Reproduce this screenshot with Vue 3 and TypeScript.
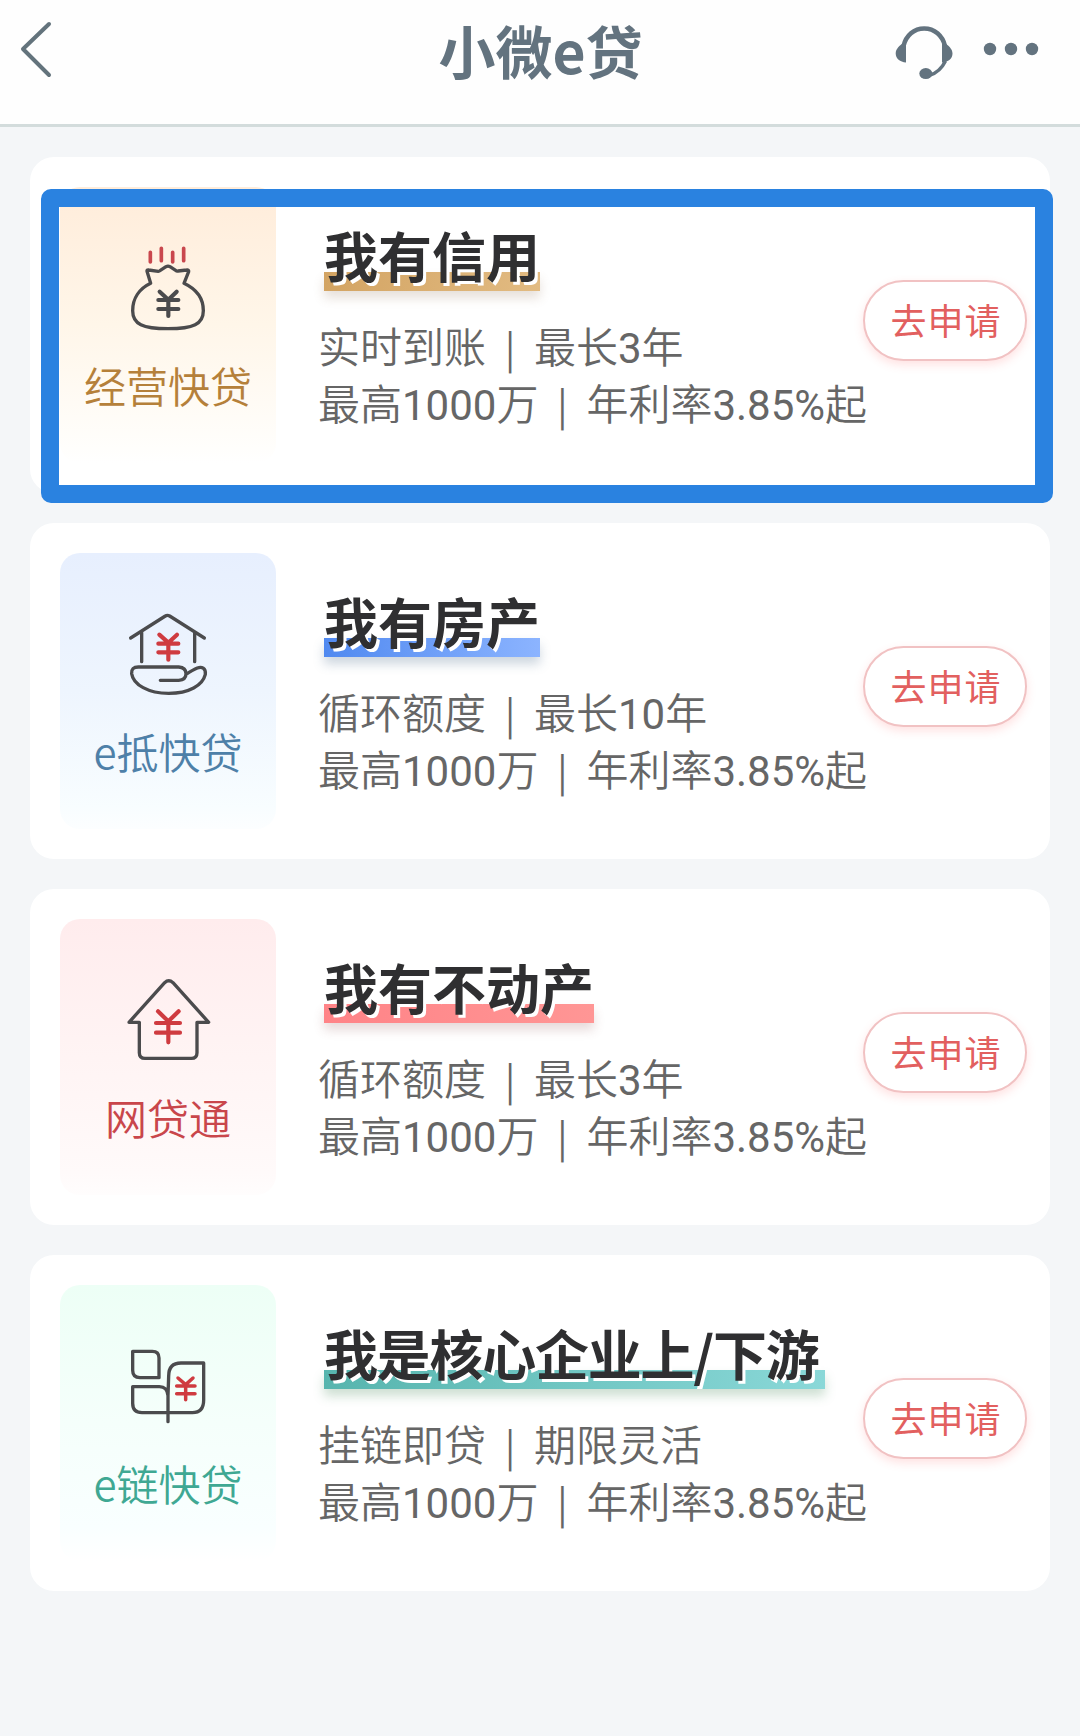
<script setup lang="ts">
interface Product {
  id: string
  label: string
  title: string
  feature: [string, string]
  limit: [string, string]
  highlighted?: boolean
}

const limit: [string, string] = ['最高1000万', '年利率3.85%起']

const products: Product[] = [
  { id: 'credit', label: '经营快贷', title: '我有信用', feature: ['实时到账', '最长3年'], limit, highlighted: true },
  { id: 'house', label: 'e抵快贷', title: '我有房产', feature: ['循环额度', '最长10年'], limit },
  { id: 'estate', label: '网贷通', title: '我有不动产', feature: ['循环额度', '最长3年'], limit },
  { id: 'chain', label: 'e链快贷', title: '我是核心企业上/下游', feature: ['挂链即贷', '期限灵活'], limit },
]
</script>

<template>
  <div class="page">
    <header class="header">
      <svg class="back" width="60" height="100" viewBox="0 0 60 100">
        <path d="M49 24 L23 49 L49 75" />
      </svg>
      <h1>小微e贷</h1>
      <svg class="tools" width="190" height="100" viewBox="890 0 190 100">
        <path class="band" d="M903.500 46C906 35.500 914 28.500 924.200 28.500S942.500 35.500 945 46" />
        <path d="M906 43V62.500C900 62 895.700 58.500 895.700 53.500S900 45.500 903 43Z" />
        <path d="M942 43V62.500C948.500 62 952.500 58.500 952.500 53.500S948 45.500 945 43Z" />
        <path class="wire" d="M945.500 61C942 68 937 73 930 75" />
        <ellipse cx="925.800" cy="73.600" rx="6.500" ry="5.500" />
        <circle cx="990" cy="49" r="6.200" />
        <circle cx="1011" cy="49" r="6.200" />
        <circle cx="1032" cy="49" r="6.200" />
      </svg>
    </header>

    <main class="list">
      <section v-for="p in products" :key="p.id" class="card" :class="p.id">
        <div class="tile">
          <svg v-if="p.id === 'credit'" class="icon" viewBox="120 21 648 510">
            <g class="steam">
              <path d="M391 217V246M424 205V242M458 217V246M491 205V242" />
            </g>
            <path d="M392 310L381 274Q380 269 386 270L415 274Q418 274 421 271L438 260Q444 257 450 260L467 271Q470 274 474 273L500 270Q507 269 506 275L492 310C530 328 550 356 550 392C550 432 520 446 444 446S338 432 338 392C338 356 358 326 392 310Z" />
            <path class="yen-dark" d="M419 335L445 359L470 335M415 360H475M415 387H475M445 359V408" />
          </svg>
          <svg v-else-if="p.id === 'house'" class="icon" viewBox="120 128 648 510">
            <path d="M332 383L436 317Q442 313 449 317L553 383M365 366V454M524 366V454" />
            <path d="M421 510H476Q498 508 498 490T476 470H355Q333 470 335 490C340 523 385 549 446 549S548 525 556 492C558 473 545 468 532 473Q520 478 498 492" />
            <path class="yen" d="M418 373L445 397L471 373M415 400H475M415 426H475M445 397V448" />
          </svg>
          <svg v-else-if="p.id === 'estate'" class="icon" viewBox="120 117 648 510">
            <path d="M358 427H327L434 308Q446 297 459 308L566 427H531V518Q531 535 514 535H375Q358 535 358 518Z" />
            <path class="yen" d="M414 394L445 424L476 394M408 429H480M408 458H480M445 424V487" />
          </svg>
          <svg v-else class="icon" viewBox="120 105 648 510">
            <path d="M338 304H397Q417 304 417 324V383H360Q338 383 338 361Z" />
            <path d="M444 437Q442 410 418 410H338V460Q338 488 366 488H517Q551 488 551 450V339H483Q446 339 446 378L444 437V515" />
            <path class="yen thin" d="M474 384L497 404L519 384M470 408H525M470 431H525M497 404V449" />
          </svg>
          <span class="label">{{ p.label }}</span>
        </div>

        <div class="info">
          <h2>{{ p.title }}</h2>
          <p>{{ p.feature[0] }}<i>|</i>{{ p.feature[1] }}</p>
          <p>{{ p.limit[0] }}<i>|</i>{{ p.limit[1] }}</p>
        </div>

        <button type="button">去申请</button>
        <div v-if="p.highlighted" class="highlight"></div>
      </section>
    </main>
  </div>
</template>

<style>
body {
  background: #f4f6f8;
}
</style>

<style scoped>
.page {
  min-height: 1736px;
  background: #f4f6f8;
  font-family: Roboto, "Noto Sans CJK SC DemiLight", "Noto Sans CJK SC", sans-serif;
}
.header {
  box-sizing: border-box;
  height: 127px;
  display: flex;
  align-items: flex-start;
  justify-content: space-between;
  background: #fefefe;
  border-bottom: 3px solid #d3dcdc;
}
.header h1 {
  flex: 1;
  margin: 0 0 0 131px;
  text-align: center;
  font: 700 57px/98px "Noto Sans CJK SC", sans-serif;
  color: #63737f;
}
.back path {
  fill: none;
  stroke: #63737c;
  stroke-width: 4;
  stroke-linecap: round;
  stroke-linejoin: round;
}
.tools {
  fill: #63737f;
}
.tools .band,
.tools .wire {
  fill: none;
  stroke: #63737f;
  stroke-width: 4.5;
}
.tools .wire {
  stroke-width: 3.5;
}
.list {
  display: flex;
  flex-direction: column;
  gap: 30px;
  padding: 30px;
}
.card {
  position: relative;
  box-sizing: border-box;
  height: 336px;
  padding: 30px 23px 30px 30px;
  display: flex;
  background: #fff;
  border-radius: 24px;
}
.tile {
  width: 216px;
  height: 276px;
  flex: none;
  display: flex;
  flex-direction: column;
  align-items: center;
  border-radius: 20px;
}
.credit .tile { background: linear-gradient(#ffecda, #fff6e9 50%, #fffefc 95%, #fff); }
.house .tile { background: linear-gradient(#e7effe, #eef5fe 50%, #f8fdff 92%, #fcfeff); }
.estate .tile { background: linear-gradient(#ffeced, #fff4f4 50%, #fffafa 92%, #fffdfd); }
.chain .tile { background: linear-gradient(#edfff6, #f5fffb 50%, #f9ffff 88%, #fff); }
.icon {
  width: 216px;
  height: 170px;
  flex: none;
  fill: none;
  stroke: #4b4b4d;
  stroke-width: 10;
  stroke-linecap: round;
  stroke-linejoin: round;
}
.steam {
  stroke: #c9474d;
  stroke-width: 11;
}
.yen,
.yen-dark {
  stroke-width: 12.5;
}
.yen {
  stroke: #cf3b40;
}
.thin {
  stroke-width: 10.5;
}
.label {
  margin-top: -2px;
  font-size: 42px;
  font-weight: 350;
  line-height: 60px;
  font-family: "Noto Sans CJK SC", sans-serif;
}
.credit .label { color: #b5803a; }
.house .label { color: #4e80a8; }
.estate .label { color: #c9464b; }
.chain .label { color: #3fa893; }
.info {
  flex: 1;
  min-width: 0;
  padding: 30px 0 0 42px;
}
.info h2 {
  position: relative;
  z-index: 0;
  width: max-content;
  margin: 0 0 29px 6px;
  height: 74px;
  font: 700 54px/75px "Noto Sans CJK SC", sans-serif;
  color: #2f2f31;
  text-shadow: 3px 3px 0 #fff;
}
.chain h2 {
  padding-right: 7px;
  letter-spacing: -1.25px;
}
.info h2::before {
  content: "";
  position: absolute;
  z-index: -1;
  left: 0;
  right: 0;
  bottom: 0;
  height: 19px;
  background: var(--bar);
  box-shadow: 0 7px 11px var(--glow);
}
.credit { --bar: linear-gradient(90deg, #d3a463, #e2bb82); --glow: #88664433; }
.house { --bar: linear-gradient(90deg, #5089f0, #8cb4ff); --glow: #44668844; }
.estate { --bar: linear-gradient(90deg, #ff8387, #ff9695); --glow: #88444433; }
.chain { --bar: linear-gradient(90deg, #57b5ae, #8ad8d8); --glow: #44885544; }
.info p {
  margin: 0;
  height: 57px;
  line-height: 57px;
  font-size: 42px;
  color: #666;
  white-space: nowrap;
}
.info i {
  display: inline-block;
  width: 48px;
  font-style: normal;
  font-family: "Noto Sans CJK SC", sans-serif;
  font-size: 38px;
  line-height: 50px;
  text-align: center;
}
button {
  position: relative;
  box-sizing: border-box;
  width: 164px;
  height: 81px;
  flex: none;
  margin: 93px 0 0 -100px;
  padding: 0 0 4px 2px;
  border: 2px solid #f1c2c3;
  border-radius: 41px;
  background: #fff;
  box-shadow: 0 4px 10px #ff60602e;
  font: 400 36px/70px "Noto Sans CJK SC", sans-serif;
  letter-spacing: 1px;
  color: #e2605f;
}
.highlight {
  position: absolute;
  left: 11px;
  top: 32px;
  box-sizing: border-box;
  width: 1012px;
  height: 314px;
  border: 18px solid #2a82e0;
  border-radius: 10px;
}
</style>
